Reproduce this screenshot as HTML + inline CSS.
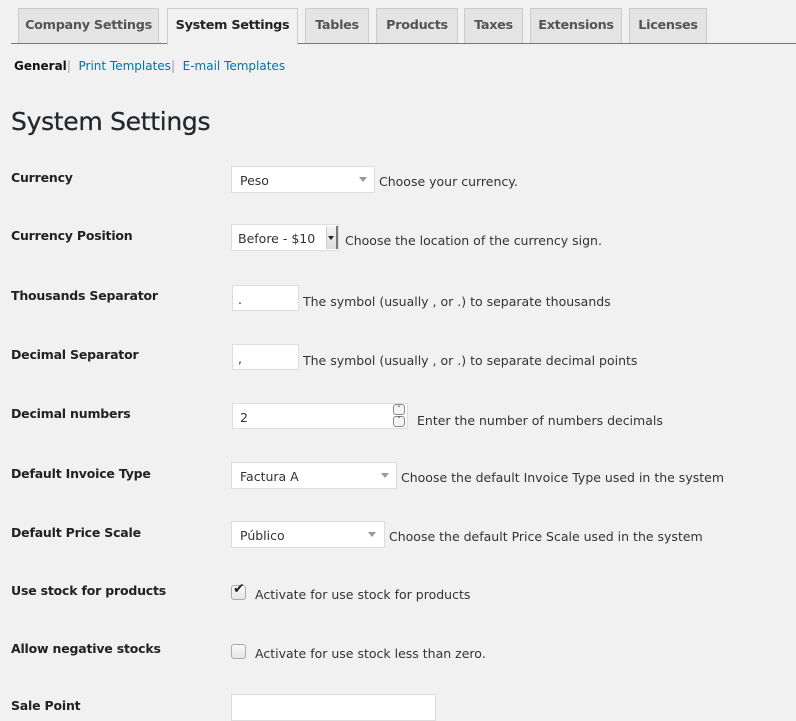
<!DOCTYPE html>
<html><head><meta charset="utf-8"><style>
*{box-sizing:border-box;margin:0;padding:0}
body{width:796px;height:704px;overflow:hidden;background:#f1f1f1;font-family:"DejaVu Sans","Liberation Sans",sans-serif;color:#333;position:relative;font-size:12.5px}
.a{position:absolute;white-space:nowrap}
.tab{position:absolute;top:8px;height:36px;background:#e4e4e4;border:1px solid #ccc;border-bottom:none;color:#555;font-weight:bold;font-size:12.8px;text-align:center;line-height:33px;letter-spacing:-0.3px;white-space:nowrap}
.tab.on{background:#f1f1f1;color:#222;border-color:#ccc;height:37px;z-index:2}
.line{position:absolute;left:11px;right:0;top:43px;height:1px;background:#777}
.lbl{position:absolute;left:11px;font-weight:bold;font-size:12.5px;color:#222;letter-spacing:-0.2px}
.box{position:absolute;background:#fff;border:1px solid #ddd;font-size:12.5px;color:#333;padding-left:8px;line-height:27px}
.desc{position:absolute;font-size:12.5px;color:#333;letter-spacing:0}
.arr{position:absolute;width:0;height:0;border-left:4px solid transparent;border-right:4px solid transparent;border-top:5px solid #999}
.cb{position:absolute;width:15px;height:15px;border:1px solid #aaa;border-radius:3px;background:linear-gradient(#fafafa,#e6e6e6)}
</style></head><body>
<div class="tab" style="left:18px;width:141px">Company Settings</div>
<div class="tab on" style="left:167px;width:131px">System Settings</div>
<div class="tab" style="left:305px;width:64px">Tables</div>
<div class="tab" style="left:376px;width:82px">Products</div>
<div class="tab" style="left:464px;width:59px">Taxes</div>
<div class="tab" style="left:530px;width:92px">Extensions</div>
<div class="tab" style="left:629px;width:78px">Licenses</div>
<div class="line"></div>

<div class="a" style="left:14px;top:59px;font-size:12px;color:#111"><b>General</b><span style="color:#999">|</span> &nbsp;<span style="color:#0073aa">Print Templates</span><span style="color:#999">|</span> &nbsp;<span style="color:#0073aa">E-mail Templates</span></div>

<div class="a" style="left:11px;top:107px;font-size:25px;color:#23282d;letter-spacing:-0.3px;-webkit-text-stroke:0.3px #23282d">System Settings</div>

<div class="lbl" style="top:170px">Currency</div>
<div class="box" style="left:231px;top:166px;width:144px;height:27px">Peso</div>
<div class="arr" style="left:359px;top:177px"></div>
<div class="desc" style="left:379px;top:174px">Choose your currency.</div>

<div class="lbl" style="top:228px">Currency Position</div>
<div class="box" style="left:231px;top:224px;width:108px;height:27px;padding-left:6px">Before - $10</div>
<div class="a" style="left:326px;top:226px;width:12px;height:23px;background:linear-gradient(#f4f4f4,#ddd);border-left:1px solid #ccc;border-right:2px solid #777"></div>
<div class="arr" style="left:328px;top:236px;border-top-color:#222;border-left-width:3px;border-right-width:3px;border-top-width:4px"></div>
<div class="desc" style="left:345px;top:233px">Choose the location of the currency sign.</div>

<div class="lbl" style="top:288px">Thousands Separator</div>
<div class="box" style="left:232px;top:285px;width:67px;height:26px;padding-left:5px">.</div>
<div class="desc" style="left:303px;top:294px">The symbol (usually , or .) to separate thousands</div>

<div class="lbl" style="top:347px">Decimal Separator</div>
<div class="box" style="left:232px;top:344px;width:67px;height:26px;padding-left:5px">,</div>
<div class="desc" style="left:303px;top:353px">The symbol (usually , or .) to separate decimal points</div>

<div class="lbl" style="top:406px">Decimal numbers</div>
<div class="box" style="left:232px;top:403px;width:176px;height:26px;padding-left:7px">2</div>
<div class="a" style="left:393px;top:404px;width:12px;height:11px;border:1px solid #888;border-radius:3px;background:#f4f4f4;font-size:8px;line-height:9px;text-align:center">&#710;</div>
<div class="a" style="left:393px;top:416px;width:12px;height:11px;border:1px solid #888;border-radius:3px;background:#f4f4f4;font-size:8px;line-height:7px;text-align:center">&#711;</div>
<div class="desc" style="left:417px;top:413px">Enter the number of numbers decimals</div>

<div class="lbl" style="top:466px">Default Invoice Type</div>
<div class="box" style="left:231px;top:462px;width:166px;height:27px">Factura A</div>
<div class="arr" style="left:381px;top:473px"></div>
<div class="desc" style="left:401px;top:470px">Choose the default Invoice Type used in the system</div>

<div class="lbl" style="top:525px">Default Price Scale</div>
<div class="box" style="left:231px;top:521px;width:154px;height:27px">Público</div>
<div class="arr" style="left:368px;top:532px"></div>
<div class="desc" style="left:389px;top:529px">Choose the default Price Scale used in the system</div>

<div class="lbl" style="top:583px">Use stock for products</div>
<div class="cb" style="left:231px;top:585px"></div>
<div class="a" style="left:233px;top:581px;font-size:14px;color:#222;font-weight:bold">&#10004;</div>
<div class="desc" style="left:255px;top:587px">Activate for use stock for products</div>

<div class="lbl" style="top:641px">Allow negative stocks</div>
<div class="cb" style="left:231px;top:644px"></div>
<div class="desc" style="left:255px;top:646px">Activate for use stock less than zero.</div>

<div class="lbl" style="top:698px">Sale Point</div>
<div class="box" style="left:231px;top:694px;width:205px;height:27px"></div>
</body></html>
